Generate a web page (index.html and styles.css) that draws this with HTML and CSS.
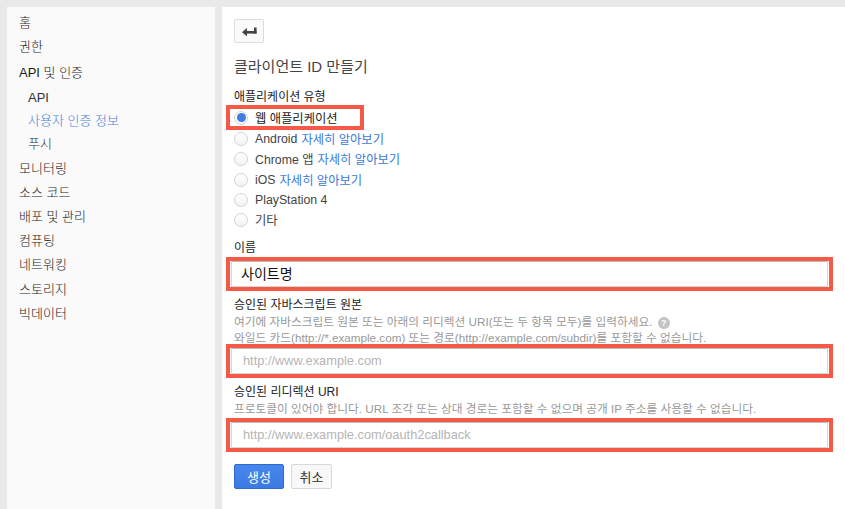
FILE: index.html
```html
<!DOCTYPE html>
<html lang="ko">
<head>
    <meta charset="UTF-8">
    <title>클라이언트 ID 만들기</title>
    <link rel="stylesheet" href="styles.css">
</head>
<body>
    <div class="layout">
        <!-- 왼쪽 메뉴 -->
        <nav class="sidebar">
            <ul class="nav-list">
                <li class="nav-item">홈</li>
                <li class="nav-item">권한</li>
                <li class="nav-item group">API 및 인증</li>
                <li class="nav-item sub">API</li>
                <li class="nav-item sub active">사용자 인증 정보</li>
                <li class="nav-item sub">푸시</li>
                <li class="nav-item">모니터링</li>
                <li class="nav-item">소스 코드</li>
                <li class="nav-item">배포 및 관리</li>
                <li class="nav-item">컴퓨팅</li>
                <li class="nav-item">네트워킹</li>
                <li class="nav-item">스토리지</li>
                <li class="nav-item">빅데이터</li>
            </ul>
        </nav>

        <!-- 본문 -->
        <main class="content">
            <button class="back-btn" type="button">
                <svg width="15" height="10" viewBox="0 0 15 10">
                    <path d="M0 6.2 L5 2 L5 10.4 Z" fill="#444"/>
                    <rect x="4.5" y="5" width="10" height="2.6" fill="#444"/>
                    <rect x="12" y="1.5" width="2.6" height="6.1" fill="#444"/>
                </svg>
            </button>

            <h1 class="page-title">클라이언트 ID 만들기</h1>

            <div class="field-label">애플리케이션 유형</div>
            <div class="radio-list">
                <label class="radio-row marked">
                    <span class="radio checked"></span>웹 애플리케이션
                </label>
                <label class="radio-row">
                    <span class="radio"></span>Android <a class="link">자세히 알아보기</a>
                </label>
                <label class="radio-row">
                    <span class="radio"></span>Chrome 앱 <a class="link">자세히 알아보기</a>
                </label>
                <label class="radio-row">
                    <span class="radio"></span>iOS <a class="link">자세히 알아보기</a>
                </label>
                <label class="radio-row">
                    <span class="radio"></span>PlayStation 4
                </label>
                <label class="radio-row">
                    <span class="radio"></span>기타
                </label>
            </div>

            <div class="field-label name-label">이름</div>
            <div class="marked-box">
                <div class="text-input filled">사이트명</div>
            </div>

            <div class="field-label origins-label">승인된 자바스크립트 원본</div>
            <p class="help">여기에 자바스크립트 원본 또는 아래의 리디렉션 URI(또는 두 항목 모두)를 입력하세요. <span class="help-icon">?</span></p>
            <p class="help">와일드 카드(http://*.example.com) 또는 경로(http://example.com/subdir)를 포함할 수 없습니다.</p>
            <div class="marked-box after-help">
                <div class="text-input placeholder">http://www.example.com</div>
            </div>

            <div class="field-label redirect-label">승인된 리디렉션 URI</div>
            <p class="help">프로토콜이 있어야 합니다. URL 조각 또는 상대 경로는 포함할 수 없으며 공개 IP 주소를 사용할 수 없습니다.</p>
            <div class="marked-box">
                <div class="text-input placeholder">http://www.example.com/oauth2callback</div>
            </div>

            <div class="actions">
                <button class="btn primary" type="button">생성</button>
                <button class="btn" type="button">취소</button>
            </div>
        </main>
    </div>
</body>
</html>
```

FILE: styles.css
```css
* {
    margin: 0;
    padding: 0;
    box-sizing: border-box;
}

html, body {
    height: 100%;
}

body {
    font-family: "Liberation Sans", "Noto Sans CJK KR", sans-serif;
    background: #e9e9e9;
    color: #222;
    overflow: hidden;
}

.layout {
    display: flex;
    gap: 7px;
    height: 100%;
    padding: 7px 0 0 7px;
}

/* 왼쪽 메뉴 */
.sidebar {
    width: 208px;
    flex-shrink: 0;
    background: #fafafa;
    padding: 4px 0 0 12px;
}

.nav-list {
    list-style: none;
}

.nav-item {
    font-size: 13px;
    font-weight: 300;
    height: 24.2px;
    line-height: 24.2px;
    color: #1a1a1a;
}

.nav-item.group {
    margin-top: 2px;
}

.nav-item.sub {
    padding-left: 9px;
    height: 23px;
    line-height: 23px;
    color: #333;
}

.nav-item.sub + .nav-item:not(.sub) {
    margin-top: 2px;
}

.nav-item.active {
    color: #4a80dc;
}

/* 본문 */
.content {
    flex: 1;
    background: #fff;
    padding: 12px 0 0 12px;
}

.back-btn {
    display: flex;
    align-items: center;
    justify-content: center;
    width: 30px;
    height: 24px;
    background: #fafafa;
    border: 1px solid #dcdcdc;
    border-radius: 2px;
}

.page-title {
    font-size: 15px;
    font-weight: normal;
    color: #444;
    line-height: 20px;
    margin-top: 14px;
}

.field-label {
    font-size: 12px;
    line-height: 16px;
    height: 16px;
    color: #222;
    margin-top: 12px;
}

.radio-list {
    display: flex;
    flex-direction: column;
}

.radio-row {
    display: flex;
    align-items: center;
    height: 20.3px;
    font-size: 12.3px;
    color: #444;
}

.radio-row.marked {
    width: 138px;
    height: 25px;
    margin-left: -8px;
    padding-left: 4px;
    border: 4px solid #f45a45;
    color: #222;
}

.radio-row.marked + .radio-row {
    margin-top: -1px;
}

.radio {
    width: 14px;
    height: 14px;
    border-radius: 50%;
    border: 1px solid #d4d4d4;
    background: linear-gradient(#fff, #f3f3f3);
    margin-right: 7px;
    display: flex;
    align-items: center;
    justify-content: center;
    flex-shrink: 0;
}

.radio.checked::after {
    content: "";
    width: 9px;
    height: 9px;
    border-radius: 50%;
    background: #3f7be0;
}

.link {
    color: #3b78d8;
    margin-left: 4px;
}

.name-label {
    margin-top: 9.5px;
}

.origins-label {
    margin-top: 6px;
}

.redirect-label {
    margin-top: 6px;
}

.marked-box {
    width: 607px;
    height: 34px;
    margin-left: -8px;
    margin-top: 1px;
    border: 4px solid #f45a45;
    padding: 0 1px;
}

.marked-box.after-help {
    margin-top: -2px;
}

.text-input {
    height: 26px;
    background: #fff;
    border: 1px solid #d6d6d6;
    border-top-color: #bdbdbd;
    padding: 0 11px;
    line-height: 24px;
    font-size: 12.8px;
}

.text-input.filled {
    font-size: 14px;
    color: #111;
    padding-left: 9px;
}

.text-input.placeholder {
    color: #b5b5b5;
}

.help {
    font-size: 11.7px;
    line-height: 16px;
    height: 16px;
    color: #999;
    white-space: nowrap;
}

.field-label + .help {
    margin-top: 1px;
}

.help + .help {
    margin-top: 0;
}

.help-icon {
    display: inline-block;
    width: 12px;
    height: 12px;
    border-radius: 50%;
    background: #c4c4c4;
    color: #fff;
    font-size: 9px;
    font-weight: bold;
    line-height: 12px;
    text-align: center;
    vertical-align: middle;
    margin-left: 2px;
}

.actions {
    display: flex;
    align-items: flex-start;
    gap: 7px;
    margin-top: 12px;
}

.btn {
    height: 25px;
    padding: 0 7.5px;
    font-family: "Liberation Sans", "Noto Sans CJK KR", sans-serif;
    font-size: 13px;
    color: #333;
    background: #f8f8f8;
    border: 1px solid #d8d8d8;
    border-radius: 2px;
}

.btn.primary {
    width: 50px;
    color: #fff;
    background: linear-gradient(#4787ed, #3b7ae2);
    border-color: #3069c9;
}
```
